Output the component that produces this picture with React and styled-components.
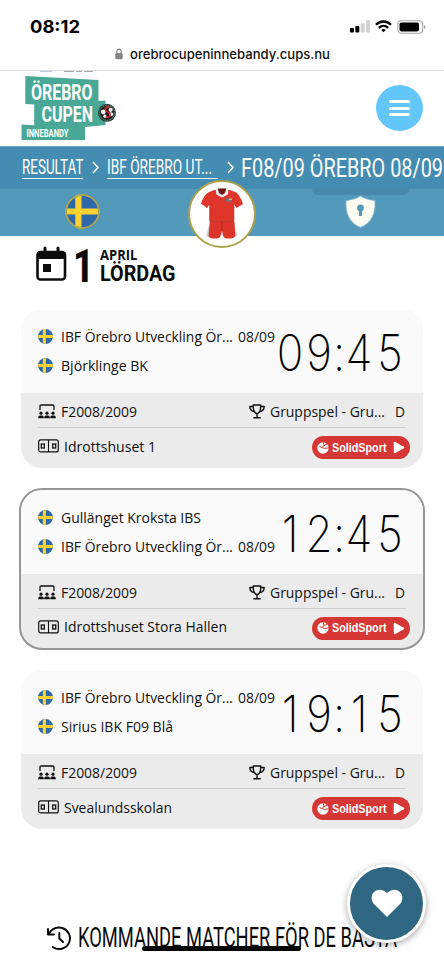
import React, { useLayoutEffect, useRef, useState } from "react";
import styled, { createGlobalStyle } from "styled-components";

const Global = createGlobalStyle`
  *, *::before, *::after { box-sizing: border-box; }
  html, body { margin: 0; padding: 0; background: #fff; }
  body { width: 444px; height: 960px; overflow: hidden; }
  svg { display: block; flex: none; }
`;

/* Text condensed or widened to a given line length */
const FitBox = styled.span`
  display: block;
  flex: none;
  width: ${(p) => p.$w}px;
  white-space: pre;
`;
const FitInner = styled.span`
  display: inline-block;
  transform-origin: 0 50%;
`;
function Fit({ w, children }) {
  const ref = useRef(null);
  const [scale, setScale] = useState(1);
  useLayoutEffect(() => {
    const el = ref.current;
    const prev = el.style.transform;
    el.style.transform = "none";
    const width = el.getBoundingClientRect().width;
    el.style.transform = prev;
    if (width) setScale(w / width);
  }, [w, children]);
  return (
    <FitBox $w={w}>
      <FitInner ref={ref} style={{ transform: `scaleX(${scale})` }}>{children}</FitInner>
    </FitBox>
  );
}

const Screen = styled.div`
  position: relative;
  width: 444px;
  height: 960px;
  overflow: hidden;
  display: flex;
  flex-direction: column;
  background: #fff;
  color: #111;
  font-family: "Open Sans", "Noto Sans", sans-serif;
`;

/* ---------- browser chrome ---------- */
const StatusBar = styled.div`
  height: 44px;
  flex: none;
  display: flex;
  align-items: center;
  justify-content: space-between;
  padding: 10px 18px 0 30px;
  font: 700 17.5px/20px Inter, sans-serif;
  color: #000;
`;
const StatusIcons = styled.div`
  display: flex;
  align-items: center;
  gap: 5px;
  padding-bottom: 1px;
`;
const AddressBar = styled.div`
  height: 27px;
  flex: none;
  display: flex;
  justify-content: center;
  gap: 7px;
  padding: 1px 0 0 1px;
  border-bottom: 1px solid #dcdcdc;
  font: 500 13px/18px Inter, sans-serif;
  color: #111;
`;
const LockIcon = styled.svg`
  margin-top: 3px;
`;

/* ---------- site header ---------- */
const Header = styled.header`
  height: 75px;
  flex: none;
  display: flex;
  justify-content: space-between;
  align-items: flex-start;
  padding: 0 21px 0 20px;
`;
const MenuButton = styled.button`
  width: 47px;
  height: 46px;
  margin-top: 14px;
  border: 0;
  padding: 0;
  border-radius: 50%;
  background: #63c6fb;
  display: flex;
  flex-direction: column;
  align-items: center;
  justify-content: center;
  gap: 3.5px;
`;
const MenuLine = styled.span`
  width: 21px;
  height: 3px;
  border-radius: 2px;
  background: #fff;
`;
const Crumbs = styled.nav`
  height: 43px;
  flex: none;
  display: flex;
  align-items: flex-start;
  padding-left: 21.5px;
  border-top: 1px solid #6ea6c3;
  background: #458cb2;
  color: #fff;
  font-family: Roboto, sans-serif;
`;
const CrumbLink = styled.span`
  height: 32px;
  width: ${(p) => p.$w}px;
  padding-top: 9px;
  flex: none;
  border-bottom: 1px solid #e8f2f6;
  font-size: 19.7px;
  line-height: 24px;
`;
const Chevron = styled.svg`
  margin: 14px ${(p) => p.$right}px 0 ${(p) => p.$left}px;
`;
const CurrentCrumb = styled.span`
  padding-top: 6px;
  font-size: 26px;
  line-height: 30px;
`;
const TabBar = styled.div`
  position: relative;
  height: 47px;
  flex: none;
  display: flex;
  justify-content: space-between;
  padding: 5px 66px 0 65px;
  background: #5299bb;
`;
const PillShade = styled.span`
  position: absolute;
  left: 312px;
  top: 0;
  width: 97px;
  height: 6px;
  border-radius: 0 0 14px 14px;
  background: #4888ad;
`;
const TeamBadge = styled.div`
  position: absolute;
  left: 188px;
  top: -9.5px;
  width: 68px;
  height: 68px;
  border-radius: 50%;
  border: 2px solid #aaa14d;
  background: #fff;
  display: flex;
  align-items: center;
  justify-content: center;
`;

/* ---------- date ---------- */
const DateRow = styled.div`
  height: 74px;
  flex: none;
  display: flex;
  align-items: flex-start;
  padding: 10px 0 0 36px;
  color: #0c0c0c;
`;
const DayNumber = styled.span`
  margin: -3px 0 0 6px;
  font: 800 46px/46px Roboto, sans-serif;
`;
const DayText = styled.div`
  display: flex;
  flex-direction: column;
  margin-left: 6px;
  padding-top: 2px;
`;
const Month = styled.span`
  font: 700 13.5px/14px "Open Sans", sans-serif;
`;
const Weekday = styled.span`
  margin-top: 2px;
  font: 700 21.5px/20px Roboto, sans-serif;
`;

/* ---------- matches ---------- */
const MatchList = styled.main`
  flex: none;
  display: flex;
  flex-direction: column;
  align-items: center;
  gap: 21px;
`;
const Card = styled.article`
  width: ${(p) => (p.$active ? 406 : 402)}px;
  border: ${(p) => (p.$active ? "2px solid #969696" : "0")};
  border-radius: ${(p) => (p.$active ? 23 : 21)}px;
  overflow: hidden;
  margin: ${(p) => (p.$active ? "-1px 0 0" : "0")};
  background: #ebebeb;
`;
const CardTop = styled.div`
  height: ${(p) => (p.$active ? 84 : 83)}px;
  display: flex;
  justify-content: space-between;
  padding: ${(p) => (p.$active ? 12.5 : 11.5)}px 20px 0 17px;
  background: #fafafa;
`;
const Teams = styled.div`
  display: flex;
  flex-direction: column;
`;
const Team = styled.div`
  height: 29px;
  display: flex;
  align-items: center;
  gap: 8px;
  font-size: 14px;
`;
const ClubClass = styled.span`
  margin-left: -3px;
`;
const Clock = styled.div`
  display: grid;
  grid-template-columns: 30px 28.5px 10px 31px 31px;
  justify-items: center;
  margin: 6.5px 0 0;
  height: 50px;
  color: #000;
  font: 250 50px/50px Inter, sans-serif;
`;
const Digit = styled.span`
  width: 0;
  display: flex;
  justify-content: center;
  transform: scaleX(0.88);
`;
const InfoRow = styled.div`
  height: 35px;
  margin: 0 17px;
  padding: 3px 1px 0 0;
  display: flex;
  align-items: center;
  justify-content: space-between;
  border-bottom: 1px solid #cfcfcf;
  font-size: 14px;
`;
const LastRow = styled(InfoRow)`
  height: ${(p) => (p.$active ? 39 : 40)}px;
  margin-right: 13px;
  padding: 0 0 4px;
  border: 0;
`;
const Info = styled.div`
  display: flex;
  align-items: center;
  gap: 5px;
`;
const Group = styled.span`
  margin-left: 5px;
`;
const SolidPill = styled.span`
  width: 98px;
  height: 23px;
  margin-top: 3px;
  border-radius: 12px;
  background: #d63735;
  display: flex;
  align-items: center;
  padding-left: 5px;
  gap: 3px;
  color: #fff;
  font: 700 12px/22px "Liberation Sans", Arial, sans-serif;
`;
const Play = styled.svg`
  margin-left: 3px;
`;

/* ---------- footer ---------- */
const Upcoming = styled.h2`
  margin: 89px 0 0 47px;
  flex: none;
  display: flex;
  align-items: center;
  gap: 6.5px;
  font: 400 27px/40px Roboto, sans-serif;
  color: #0b0b0b;
`;
const HomeIndicator = styled.div`
  position: absolute;
  left: 142px;
  top: 946px;
  width: 159px;
  height: 5px;
  border-radius: 3px;
  background: #050505;
`;
const FavoriteButton = styled.button`
  position: absolute;
  left: 347px;
  top: 864px;
  width: 79px;
  height: 79px;
  padding: 0;
  border: 3px solid #fff;
  border-radius: 50%;
  background: #2f6681;
  box-shadow: 0 2px 7px rgba(0, 0, 0, 0.35);
  display: flex;
  align-items: center;
  justify-content: center;
`;

const Flag = ({ size = 15, ring }) => (
  <svg width={size} height={size} viewBox="0 0 34 34">
    <clipPath id={`flag${size}`}><circle cx="17" cy="17" r="17" /></clipPath>
    <g clipPath={`url(#flag${size})`}>
      <rect width="34" height="34" fill="#2f68a8" />
      <path d={ring ? "M10 0h6v34h-6zM0 14h34v6H0z" : "M11 0h7v34h-7zM0 13.5h34v7H0z"} fill="#fbd232" />
    </g>
    {ring && <circle cx="17" cy="17" r="16" fill="none" stroke="#a9a659" strokeWidth="2" />}
  </svg>
);

const Logo = () => (
  <svg width="100" height="72" viewBox="20 71 100 72">
    <path d="M40 71h12v.5H40z" fill="#7694c4" />
    <path d="M64 71h10v.5H64zM76 71h6v.5h-6zM84 71h9v.5h-9z" fill="#555" />
    <path d="M25.3 76 98.5 80V101l7-.5v24.5l-20.5 2V140L21.5 140V124.5l12.7.8V104.500l-8.900-.5z" fill="#4aa996" />
    <g fill="#fff" fontFamily="Roboto, sans-serif" fontWeight="700">
      <text x="31" y="100.300" fontSize="22" textLength="61.5" lengthAdjust="spacingAndGlyphs">ÖREBRO</text>
      <text x="41.500" y="121.900" fontSize="22" textLength="51.5" lengthAdjust="spacingAndGlyphs">CUPEN</text>
      <text x="26.500" y="136.600" fontSize="10.5" textLength="42" lengthAdjust="spacingAndGlyphs">INNEBANDY</text>
    </g>
    <circle cx="107" cy="112.800" r="9" fill="#263d33" />
    <circle cx="107" cy="112.800" r="7.600" fill="none" stroke="#708c7c" strokeWidth="1" strokeDasharray="1.4 1.2" />
    <circle cx="107" cy="112.800" r="6.400" fill="#17181a" />
    <circle cx="103.300" cy="112" r="2.400" fill="#f5efef" />
    <circle cx="110.600" cy="109.800" r="2.100" fill="#f5efef" />
    <circle cx="111.200" cy="114.300" r="2" fill="#f5efef" />
    <circle cx="105" cy="116.300" r="1.700" fill="#f5efef" />
    <path d="M110 107.500c-3-1.600-6 .5-4 3.200 1.600 2 4.600 1.700 4.200 4.600-.3 2-3 2.400-4.500 1.400" fill="none" stroke="#d6243c" strokeWidth="1.600" />
  </svg>
);

const Kit = () => (
  <svg width="44" height="54" viewBox="0 0 44 54">
    <path d="m10 35-4 14 4 1.500zM34 35l3.500 13.500-3.500 1.500z" fill="#cfcfcf" />
    <path d="M9.800 34.500h24.600l.8 14c-.4 2.500-3 3-6 3-3.200 0-5.200-.5-6-2.500L22 44l-1.400 5c-.8 2-2.800 2.500-6 2.500-3 0-5.600-.5-6-3z" fill="#dd352a" />
    <path d="M14 3 30 3 36.500 5.500C39 8 41.500 12 43 17l-6.500 4-2.700-4V34.500H9.800V17L7 21 1 16.500C2.500 12 5 7.500 8 5.500z" fill="#e0352a" />
    <path d="M9.800 17v17M33.800 17v17M9.800 34.600h24M22 35v9" stroke="#a72720" strokeWidth=".8" fill="none" />
    <path d="M15.500 2 21.500.500 28.500 2l-.6 5.500-5.900 3-5.700-3z" fill="#f3eeed" />
    <path d="M17.700 1.500h8.600l-1.300 4.500-3 2-3-2z" fill="#6e1815" />
    <path d="M26 11.500h6v3h-6z" fill="#567c80" />
    <path d="M29 11.500h3V13h-3z" fill="#dbb66b" />
  </svg>
);

const AudienceIcon = () => (
  <svg width="18" height="15" viewBox="0 0 18 15">
    <path d="M2 6V2.200Q2 1 3.200 1H14.800Q16 1 16 2.200V6" fill="none" stroke="#111" strokeWidth="1.300" />
    {[3, 9, 15].map((x) => (
      <g key={x} fill="#111">
        <circle cx={x} cy="9.200" r="1.600" />
        <path d={`M${x - 2.700} 14.200v-1q0-1.600 1.600-1.600h2.200q1.600 0 1.600 1.600v1z`} />
      </g>
    ))}
  </svg>
);

const CourtIcon = () => (
  <svg width="21" height="14" viewBox="0 0 21 14" fill="none" stroke="#111">
    <rect x=".7" y=".9" width="19.600" height="12" rx="2" strokeWidth="1.200" />
    <path d="M10.500 1v12" strokeWidth="1.100" />
    <rect x="3.300" y="5" width="3" height="4" strokeWidth="1.300" />
    <rect x="14.700" y="5" width="3" height="4" strokeWidth="1.300" />
  </svg>
);

const TrophyIcon = () => (
  <svg width="16" height="15" viewBox="0 0 16 15" fill="none" stroke="#111" strokeWidth="1.400" strokeLinecap="round" strokeLinejoin="round">
    <path d="M4.300 1h7.400C12 5.800 10.600 9 8 9.700 5.400 9 4 5.800 4.300 1zM8 9.700v3.800M4.800 13.800h6.400M4.300 2.500H.8c.1 3 1.700 4.800 4.500 5.100M11.700 2.500h3.500c-.1 3-1.700 4.800-4.500 5.100" />
  </svg>
);

const SolidSport = () => (
  <SolidPill>
    <svg width="12" height="12" viewBox="0 0 12 12">
      <circle cx="6" cy="6" r="5.700" fill="#fff" />
      <path d="M6.200-.2 7 3.600 11 1.500M7 3.600 5 5.500 7.600 6.600 12 5.600M5 5.500 2.600 4.600" stroke="#d63735" strokeWidth="1" fill="none" />
    </svg>
    <Fit w={54.5}>SolidSport</Fit>
    <Play width="12" height="13" viewBox="0 0 12 13">
      <path d="M1.500 1.500v10L10.500 6.500z" fill="#fff" stroke="#fff" strokeWidth="1.500" strokeLinejoin="round" />
    </Play>
  </SolidPill>
);

const HOME = { name: "IBF Örebro Utveckling Ör...", w: 172, club: true };
const MATCHES = [
  { time: "09:45", teams: [HOME, { name: "Björklinge BK", w: 87 }], venue: "Idrottshuset 1", venueW: 92 },
  { time: "12:45", teams: [{ name: "Gullänget Kroksta IBS", w: 140 }, HOME], venue: "Idrottshuset Stora Hallen", venueW: 163, active: true },
  { time: "19:15", teams: [HOME, { name: "Sirius IBK F09 Blå", w: 112 }], venue: "Svealundsskolan", venueW: 108 },
];

const Match = ({ time, teams, venue, venueW, active }) => (
  <Card $active={active}>
    <CardTop $active={active}>
      <Teams>
        {teams.map((t) => (
          <Team key={t.name}>
            <Flag />
            <Fit w={t.w}>{t.name}</Fit>
            {t.club && <ClubClass><Fit w={37}>08/09</Fit></ClubClass>}
          </Team>
        ))}
      </Teams>
      <Clock>
        {time.split("").map((c, i) => <Digit key={i}>{c}</Digit>)}
      </Clock>
    </CardTop>
    <InfoRow>
      <Info><AudienceIcon /><Fit w={76}>F2008/2009</Fit></Info>
      <Info>
        <TrophyIcon />
        <Fit w={115}>Gruppspel - Gru...</Fit>
        <Group><Fit w={10}>D</Fit></Group>
      </Info>
    </InfoRow>
    <LastRow $active={active}>
      <Info><CourtIcon /><Fit w={venueW}>{venue}</Fit></Info>
      <SolidSport />
    </LastRow>
  </Card>
);

export default function App() {
  return (
    <Screen>
      <Global />
      <StatusBar>
        <Fit w={50}>08:12</Fit>
        <StatusIcons>
          <svg width="20" height="13" viewBox="0 0 20 13">
            <rect x="0" y="8" width="4" height="4.500" rx="1" />
            <rect x="5.300" y="6" width="4" height="6.500" rx="1" />
            <rect x="10.700" y="3.200" width="4" height="9.300" rx="1" fill="#d2d2d2" />
            <rect x="16" y="0" width="4" height="12.500" rx="1" fill="#d2d2d2" />
          </svg>
          <svg width="17" height="13" viewBox="0 0 17 13" fill="none" stroke="#000" strokeWidth="2.300">
            <path d="M1 4.700c4.300-4.300 10.700-4.300 15 0M3.900 7.800c2.700-2.600 6.500-2.600 9.200 0" />
            <path d="M8.500 12.300 6.200 10c1.300-1.200 3.300-1.200 4.600 0z" fill="#000" stroke="none" />
          </svg>
          <svg width="29" height="14" viewBox="0 0 29 14">
            <rect x=".7" y=".7" width="25" height="12.500" rx="3.500" fill="none" stroke="#a7a7a7" strokeWidth="1.100" />
            <rect x="2.500" y="2.400" width="19.500" height="9" rx="1.800" />
            <path d="M27 5c1.800.6 1.800 3.400 0 4z" fill="#999" />
          </svg>
        </StatusIcons>
      </StatusBar>
      <AddressBar>
        <LockIcon width="8" height="12" viewBox="0 0 8 12">
          <path d="M1.800 6V3.600c0-3.200 4.400-3.200 4.400 0V6" fill="none" stroke="#858585" strokeWidth="1.200" />
          <rect x=".3" y="5" width="7.400" height="6.200" rx="1.200" fill="#858585" />
        </LockIcon>
        <Fit w={200}>orebrocupeninnebandy.cups.nu</Fit>
      </AddressBar>
      <Header>
        <Logo />
        <MenuButton aria-label="Meny"><MenuLine /><MenuLine /><MenuLine /></MenuButton>
      </Header>
      <Crumbs>
        <CrumbLink $w={61.5}><Fit w={61.5}>RESULTAT</Fit></CrumbLink>
        <Chevron $left={9} $right={8} width="7" height="13" viewBox="0 0 7 13"><path d="m1 1 5 5.500L1 12" fill="none" stroke="#fff" strokeWidth="1.500" /></Chevron>
        <CrumbLink $w={110.5}><Fit w={105}>IBF ÖREBRO UT...</Fit></CrumbLink>
        <Chevron $left={9} $right={7} width="7" height="13" viewBox="0 0 7 13"><path d="m1 1 5 5.500L1 12" fill="none" stroke="#fff" strokeWidth="1.500" /></Chevron>
        <CurrentCrumb><Fit w={202}>F08/09 ÖREBRO 08/09</Fit></CurrentCrumb>
      </Crumbs>
      <TabBar>
        <PillShade />
        <Flag size={35} ring />
        <svg width="35" height="36" viewBox="0 0 35 36">
          <path d="M17.500 2.500c4.500 3 9 3.700 14 4.400C32.500 19 28 29 17.500 33 7 29 2.500 19 3.500 6.900 8.500 6.200 13 5.500 17.500 2.500z" fill="#b9d8df" stroke="#8fbfd0" strokeWidth="2" opacity=".7" />
          <path d="M17.500 2.500c4.500 3 9 3.700 14 4.400C32.500 19 28 29 17.500 33 7 29 2.500 19 3.500 6.900 8.500 6.200 13 5.500 17.500 2.500z" fill="#fdfdf3" />
          <circle cx="17.500" cy="14" r="3.400" fill="#5299bb" />
          <path d="M16 14h3v8h-3z" fill="#5299bb" />
        </svg>
        <TeamBadge><Kit /></TeamBadge>
      </TabBar>
      <DateRow>
        <svg width="31" height="36" viewBox="0 0 31 36">
          <path d="M9 2v5M22 2v5" stroke="#0c0c0c" strokeWidth="3" strokeLinecap="round" />
          <rect x="1.500" y="6" width="27.500" height="27.500" rx="3" fill="#fff" stroke="#0c0c0c" strokeWidth="2.600" />
          <path d="M1 6h28.500V13H1z" fill="#0c0c0c" />
          <rect x="7" y="18" width="8" height="8" fill="#0c0c0c" />
        </svg>
        <DayNumber><Fit w={21}>1</Fit></DayNumber>
        <DayText>
          <Month><Fit w={37.5}>APRIL</Fit></Month>
          <Weekday><Fit w={75.5}>LÖRDAG</Fit></Weekday>
        </DayText>
      </DateRow>
      <MatchList>
        {MATCHES.map((m) => <Match key={m.time} {...m} />)}
      </MatchList>
      <Upcoming>
        <svg width="24" height="25" viewBox="0 0 24 25" fill="none" stroke="#0b0b0b" strokeWidth="2" strokeLinecap="round" strokeLinejoin="round">
          <path d="M1 3v5.500h6M1.500 8C5 2 11 .2 16 2.200c5.500 2.200 8.300 8.200 6.300 13.800-2.300 6.500-10.500 9.300-16.500 5M12.300 7v5.500L16 16" />
        </svg>
        <Fit w={319}>KOMMANDE MATCHER FÖR DE BÄSTA</Fit>
      </Upcoming>
      <HomeIndicator />
      <FavoriteButton aria-label="Favorit">
        <svg width="32" height="29" viewBox="0 0 32 29">
          <path d="M16 28 2.500 14.500C-3.500 6 6-4.500 16 4 26-4.500 35.500 6 29.500 14.500z" fill="#fff" />
        </svg>
      </FavoriteButton>
    </Screen>
  );
}
